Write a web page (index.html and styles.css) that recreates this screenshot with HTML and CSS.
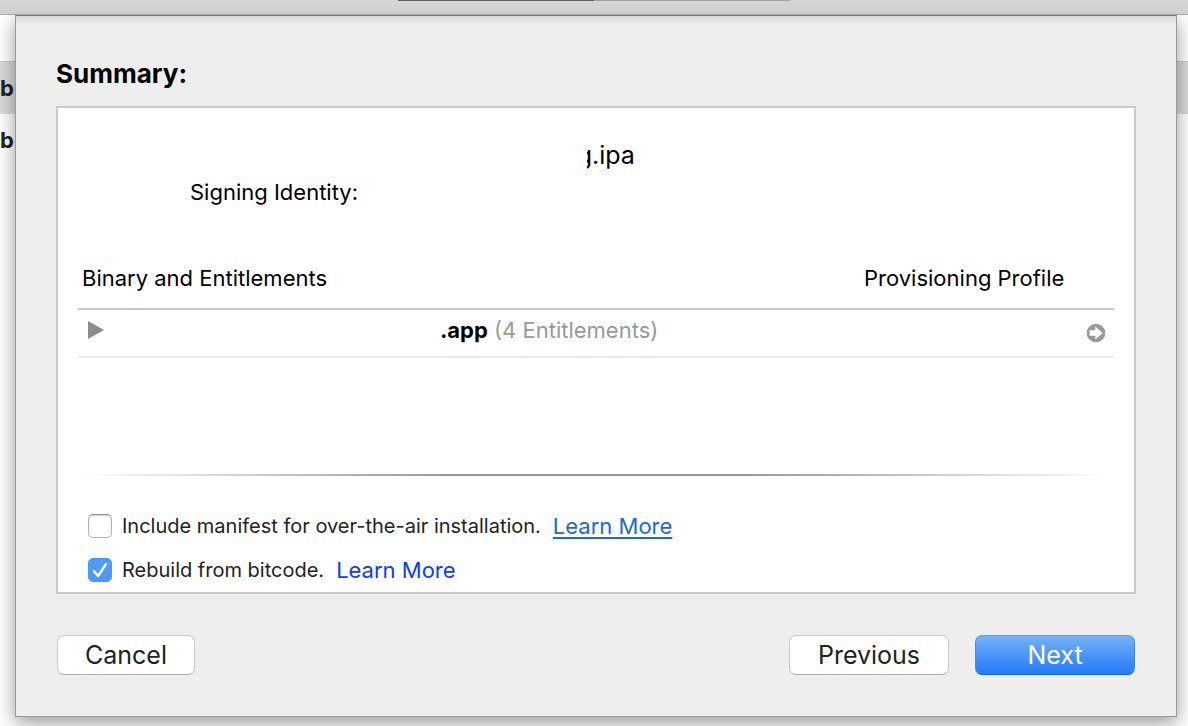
FILE: index.html
```html
<!DOCTYPE html>
<html lang="en">
<head>
<meta charset="utf-8">
<meta name="viewport" content="width=device-width, initial-scale=1">
<title>Summary</title>
<link rel="stylesheet" href="styles.css">
</head>
<body>
<header class="toolbar"><div class="segments"><span class="segment segment-on"></span><span class="segment"></span></div></header>
<div class="workspace">
  <ul class="archives">
    <li class="archive archive-selected">b</li>
    <li class="archive">b</li>
  </ul>
  <main class="sheet">
    <h1 class="heading">Summary:</h1>
    <section class="panel">
      <p class="package"><span class="cut">g</span>.ipa</p>
      <p class="identity">Signing Identity:</p>
      <table class="binaries">
        <thead>
          <tr><th class="binary-head">Binary and Entitlements</th><th class="profile-head">Provisioning Profile</th></tr>
        </thead>
        <tbody>
          <tr>
            <td>
              <div class="binary">
                <button class="disclose" type="button" aria-label="Show entitlements"><svg class="triangle" viewBox="0 0 16 18"><path d="M0 0 16 9 0 18Z" fill="#8c8c8c"/></svg></button>
                <span><strong>.app</strong> <span class="count">(4 Entitlements)</span></span>
              </div>
            </td>
            <td class="profile">
              <button class="reveal" type="button" aria-label="Show profile"><svg class="arrow" viewBox="0 0 20 20"><circle cx="10" cy="10" r="9.3" fill="#999"/><path d="M3.6 7.3H9.3V3.4L16.6 10 9.3 16.6V12.7H3.6Z" fill="#fff"/></svg></button>
            </td>
          </tr>
        </tbody>
      </table>
      <hr class="divider">
      <div class="options">
        <div class="option">
          <input class="check" type="checkbox" id="manifest">
          <label for="manifest">Include manifest for over-the-air installation.</label>
          <a class="link link-underlined" href="#manifest">Learn More</a>
        </div>
        <div class="option">
          <span class="check-wrap"><input class="check" type="checkbox" id="bitcode" checked><svg class="tick" viewBox="0 0 24 24"><path d="M6 13.2 10 18 18 6.2" fill="none" stroke="#fff" stroke-width="2.4" stroke-linecap="round" stroke-linejoin="round"/></svg></span>
          <label for="bitcode">Rebuild from bitcode.</label>
          <a class="link" href="#bitcode">Learn More</a>
        </div>
      </div>
    </section>
    <footer class="actions">
      <button class="button button-cancel" type="button">Cancel</button>
      <button class="button" type="button">Previous</button>
      <button class="button button-primary" type="button">Next</button>
    </footer>
  </main>
</div>
</body>
</html>
```

FILE: styles.css
```css
* { box-sizing: border-box; }
body {
  margin: 0;
  min-height: 100vh;
  display: flex;
  flex-direction: column;
  background: #fff;
  color: #000;
  font-family: Inter, Roboto, sans-serif;
  font-size: 22px;
  line-height: 28px;
}
button, input { font: inherit; margin: 0; padding: 0; }
p, h1, ul { margin: 0; padding: 0; }

.toolbar {
  height: 15px;
  background: linear-gradient(#d7d5d7, #d1cfd1);
  border-bottom: 1px solid #aaa8aa;
}
.segments { display: flex; width: 33%; margin: 0 auto; }
.segment { flex: 1; height: 1px; background: #a3a1a3; }
.segment-on { background: #5f5b5f; }

.workspace { flex: 1; display: grid; overflow: hidden; }
.archives { grid-area: 1 / 1; list-style: none; padding-top: 46px; }
.archive { height: 53px; line-height: 52px; font-size: 22px; font-weight: 700; color: #222; }
.archive-selected { background: #dadada; border-top: 1px solid #ccc; }

.sheet {
  grid-area: 1 / 1;
  position: relative;
  margin: 0 11px 9px 15px;
  padding: 42px 40px 40px;
  border: 1px solid #999;
  border-top-color: #777;
  background: linear-gradient(#d8d8d8, #eee 8px);
  box-shadow: 0 6px 18px rgba(0, 0, 0, .4);
}
.heading { font-size: 26px; line-height: 32px; font-weight: 700; }
.panel {
  margin-top: 16px;
  padding: 32px 20px 8px;
  border: 2px solid #cacaca;
  background: #fff;
}
.package {
  display: flex;
  justify-content: center;
  padding-left: 30px;
  font-size: 25px;
  line-height: 30px;
}
.cut { display: flex; justify-content: flex-end; width: 5px; overflow: hidden; }
.identity { margin: 8px 0 0 112px; }

.binaries { width: 100%; margin-top: 58px; border-collapse: separate; border-spacing: 0; }
.binaries th { padding: 0 4px 16px; font-weight: 400; text-align: left; border-bottom: 2px solid #cacaca; }
.binaries .profile-head { width: 254px; }
.binaries td { padding: 6px 10px 12px; border-bottom: 2px solid #eaeaea; }
.binary { display: flex; align-items: center; gap: 336px; }
.disclose, .reveal { display: flex; border: 0; background: none; }
.triangle { width: 16px; height: 18px; }
.count { color: #999; }
.binaries .profile { padding: 10px 8px; }
.reveal { margin-left: auto; }
.arrow { width: 20px; height: 20px; }

.divider {
  height: 2px;
  margin: 116px 0 0;
  border: 0;
  background: linear-gradient(90deg, transparent, #999 35%, #999 65%, transparent);
}
.options { display: flex; flex-direction: column; gap: 16px; margin-top: 36px; padding-left: 10px; }
.option { display: flex; align-items: center; font-size: 20px; color: #222; }
.option label { margin: 0 12px 0 10px; }
.check {
  appearance: none;
  display: block;
  width: 24px;
  height: 24px;
  border: 1px solid #b4b4b4;
  border-top-color: #909090;
  border-radius: 5px;
  background: #fff;
  box-shadow: inset 0 1px 2px rgba(0, 0, 0, .2);
}
.check:checked { border-color: #4a97f5; background: #4e9af7; box-shadow: none; }
.check-wrap { display: grid; }
.check-wrap > * { grid-area: 1 / 1; }
.tick { width: 24px; height: 24px; z-index: 1; pointer-events: none; }
.link { font-size: 22px; color: #0a3cff; text-decoration: none; }
.link-underlined { color: #1c69d4; text-decoration: underline; text-decoration-thickness: 2px; text-underline-offset: 3px; }

.actions { display: flex; gap: 26px; margin-top: 41px; padding: 0 1px; }
.button {
  min-width: 160px;
  height: 40px;
  border: 1px solid #c8c8c8;
  border-bottom-color: #aaa;
  border-radius: 7px;
  background: #fff;
  color: #222;
  font-size: 25px;
}
.button-cancel { min-width: 138px; margin-right: auto; }
.button-primary {
  border-color: #5d9fea #3e8bf4 #0f65f5;
  background: linear-gradient(#76b2f5, #217bfa);
  color: #fff;
}
```
